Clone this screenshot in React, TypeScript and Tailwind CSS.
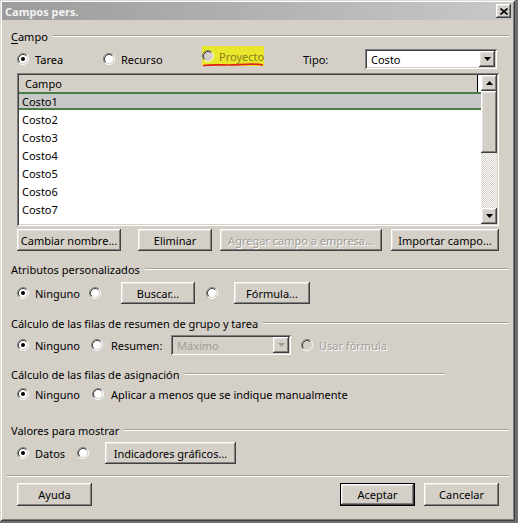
import React from "react";

// Classic 3D bevels
const RAISED =
  "bg-[#d4d0c8] shadow-[inset_-1px_-1px_0_#404040,inset_1px_1px_0_#ffffff,inset_-2px_-2px_0_#808080,inset_2px_2px_0_#e6e3de]";
const SUNKEN =
  "shadow-[inset_1px_1px_0_#808080,inset_-1px_-1px_0_#ffffff,inset_2px_2px_0_#404040,inset_-2px_-2px_0_#d4d0c8]";
const DISABLED_TEXT = "text-[#a09d97] [text-shadow:1px_1px_0_#ffffff]";

function Radio({ checked = false, disabled = false }: { checked?: boolean; disabled?: boolean }) {
  return (
    <svg width="12" height="12" viewBox="0 0 12 12" className="block shrink-0">
      <circle cx="6" cy="6" r="4.5" fill={disabled ? "#d4d0c8" : "#ffffff"} />
      <path d="M2.11 9.89A5.5 5.5 0 0 1 9.89 2.11" fill="none" stroke="#808080" />
      <path d="M9.89 2.11A5.5 5.5 0 0 1 2.11 9.89" fill="none" stroke="#ffffff" />
      <path d="M2.82 9.18A4.5 4.5 0 0 1 9.18 2.82" fill="none" stroke="#404040" />
      <path d="M9.18 2.82A4.5 4.5 0 0 1 2.82 9.18" fill="none" stroke="#d4d0c8" />
      {checked && <circle cx="6" cy="6" r="2" fill="#000000" />}
    </svg>
  );
}

function Option({
  label,
  checked = false,
  disabled = false,
  className = "",
  labelClass = "ml-[6px]",
}: {
  label: string;
  checked?: boolean;
  disabled?: boolean;
  className?: string;
  labelClass?: string;
}) {
  return (
    <div className={`flex items-center ${className}`}>
      <Radio checked={checked} disabled={disabled} />
      <span className={`${labelClass} whitespace-nowrap ${disabled ? DISABLED_TEXT : ""}`}>{label}</span>
    </div>
  );
}

function Btn({
  label,
  className = "",
  disabled = false,
  isDefault = false,
}: {
  label: string;
  className?: string;
  disabled?: boolean;
  isDefault?: boolean;
}) {
  const face = (
    <div
      className={`w-full h-full flex items-center justify-center whitespace-nowrap ${RAISED} ${
        disabled ? DISABLED_TEXT : ""
      }`}
    >
      {label}
    </div>
  );
  if (isDefault) return <div className={`border border-black ${className}`}>{face}</div>;
  return <div className={className}>{face}</div>;
}

function Arrow({ up = false, color = "#000000" }: { up?: boolean; color?: string }) {
  return (
    <svg width="7" height="4" viewBox="0 0 7 4" className="block">
      <polygon points={up ? "3.5,0 7,4 0,4" : "0,0 7,0 3.5,4"} fill={color} />
    </svg>
  );
}

function Combo({
  value,
  disabled = false,
  className = "",
}: {
  value: string;
  disabled?: boolean;
  className?: string;
}) {
  return (
    <div className={`h-[20px] p-[2px] flex ${SUNKEN} ${disabled ? "bg-[#d4d0c8]" : "bg-white"} ${className}`}>
      <div className={`flex-1 flex items-center pl-[4px] ${disabled ? "text-[#a09d97]" : ""}`}>{value}</div>
      <div className={`w-[16px] h-[16px] flex items-center justify-center ${RAISED}`}>
        <Arrow color={disabled ? "#a09d97" : "#000000"} />
      </div>
    </div>
  );
}

function Legend({
  children,
  className = "",
  lineClass = "",
}: {
  children: React.ReactNode;
  className?: string;
  lineClass?: string;
}) {
  return (
    <div className={`h-[16px] flex items-center ${className}`}>
      <span className="whitespace-nowrap">{children}</span>
      <div className={`flex-1 ml-[5px] h-[2px] border-t border-t-[#a0a0a0] border-b border-b-white ${lineClass}`} />
    </div>
  );
}

const FIELDS = ["Costo1", "Costo2", "Costo3", "Costo4", "Costo5", "Costo6", "Costo7", "Costo8"];

function FieldList() {
  return (
    <div className={`mt-[4px] ml-[6px] w-[482px] h-[153px] p-[2px] bg-white flex ${SUNKEN}`}>
      <div className="flex-1 flex flex-col overflow-hidden">
        <div className="h-[17px] shrink-0 flex bg-[#d4d0c8]">
          <div className="w-[459px] border-r border-black flex items-center pl-[6px]">Campo</div>
          <div className="flex-1 bg-white" />
        </div>
        {FIELDS.map((f, i) => (
          <div
            key={f}
            className={`h-[18px] shrink-0 flex items-center pl-[3px] ${
              i === 0 ? "bg-[#c8c8c8] border-y-2 border-[#4b7d4b]" : "bg-white"
            }`}
          >
            {f}
          </div>
        ))}
      </div>
      <div className="w-[16px] flex flex-col">
        <div className={`h-[16px] flex items-center justify-center ${RAISED}`}>
          <Arrow up />
        </div>
        <div className={`h-[62px] ${RAISED}`} />
        <div className="flex-1 bg-[repeating-conic-gradient(#d4d0c8_0%_25%,#ffffff_0%_50%)] bg-size-[2px_2px]" />
        <div className={`h-[16px] flex items-center justify-center ${RAISED}`}>
          <Arrow />
        </div>
      </div>
    </div>
  );
}

export default function App() {
  return (
    <div className="w-[518px] h-[523px] bg-[#6f6f6f] overflow-hidden [font-family:'Noto_Sans','Open_Sans',sans-serif] text-[11px] leading-none text-black">
      <div className="w-[515px] h-[521px] bg-[#d4d0c8] flex flex-col shadow-[inset_1px_1px_0_#dcdad4,inset_-1px_-1px_0_#404040,inset_2px_2px_0_#ffffff,inset_-2px_-2px_0_#808080]">
        {/* title bar */}
        <div className="mx-[2px] mt-[2px] h-[18px] shrink-0 flex items-center pl-[3px] bg-linear-to-r from-[#9c9c9c] to-[#c8c8c8]">
          <span className="font-bold text-[11px] text-[#f2f2f2]">Campos pers.</span>
          <div className={`ml-auto mr-[2px] w-[15px] h-[14px] flex items-center justify-center ${RAISED}`}>
            <svg width="8" height="7" viewBox="0 0 8 7" className="block">
              <path d="M0.5 0.5L7.5 6.5M7.5 0.5L0.5 6.5" stroke="#000" strokeWidth="1.6" />
            </svg>
          </div>
        </div>

        <div className="flex flex-col pl-[11px] pr-[6px]">
          <Legend className="mt-[8px]">
            <span className="underline underline-offset-2">C</span>ampo
          </Legend>

          <div className="mt-[5px] ml-[6px] w-[482px] h-[20px] flex items-center">
            <Option label="Tarea" checked className="w-[86px]" />
            <Option label="Recurso" className="w-[99px]" />
            <div className="w-[101px] h-full flex">
              <div className="relative self-start -mt-[3px] h-[20px] w-[62px] bg-[#e9e72c] flex items-center">
                <Radio disabled />
                <span className="ml-[5px] text-[#86801a]">Proyecto</span>
                <svg className="absolute left-0 top-[16px]" width="62" height="5" viewBox="0 0 62 5">
                  <path d="M1 3.5C12 2 25 3.6 38 2.6S55 1.8 61 3" stroke="#e0201c" strokeWidth="1.6" fill="none" />
                </svg>
              </div>
            </div>
            <div className="w-[62px]">Tipo:</div>
            <Combo value="Costo" className="w-[132px]" />
          </div>

          <FieldList />

          <div className="mt-[3px] ml-[6px] w-[482px] h-[22px] flex">
            <Btn label="Cambiar nombre..." className="w-[104px]" />
            <Btn label="Eliminar" className="ml-[17px] w-[74px]" />
            <Btn label="Agregar campo a empresa..." disabled className="ml-[8px] w-[162px]" />
            <Btn label="Importar campo..." className="ml-[9px] w-[108px]" />
          </div>

          <Legend className="mt-[10px]">Atributos personalizados</Legend>
          <div className="mt-[5px] ml-[6px] h-[22px] flex items-center">
            <Option label="Ninguno" checked className="w-[72px]" />
            <Radio />
            <Btn label="Buscar..." className="ml-[20px] w-[74px] h-full" />
            <div className="ml-[11px]">
              <Radio />
            </div>
            <Btn label="Fórmula..." className="ml-[16px] w-[76px] h-full" />
          </div>

          <Legend className="mt-[11px]">Cálculo de las filas de resumen de grupo y tarea</Legend>
          <div className="mt-[4px] ml-[6px] h-[20px] flex items-center">
            <Option label="Ninguno" checked className="w-[74px]" />
            <Option label="Resumen:" className="w-[80px]" labelClass="ml-[8px]" />
            <Combo value="Máximo" disabled className="w-[120px]" />
            <Option label="Usar fórmula" disabled className="ml-[10px]" labelClass="ml-[6px]" />
          </div>

          <Legend className="mt-[11px]" lineClass="mr-[64px]">
            Cálculo de las filas de asignación
          </Legend>
          <div className="mt-[4px] ml-[6px] h-[16px] flex items-center">
            <Option label="Ninguno" checked className="w-[75px]" />
            <Option label="Aplicar a menos que se indique manualmente" labelClass="ml-[7px]" />
          </div>

          <Legend className="mt-[20px]">Valores para mostrar</Legend>
          <div className="mt-[4px] ml-[6px] h-[22px] flex items-center">
            <Option label="Datos" checked className="w-[60px]" />
            <Radio />
            <Btn label="Indicadores gráficos..." className="ml-[16px] w-[131px] h-full" />
          </div>

          <div className="mt-[11px] -ml-[4px] h-[2px] border-t border-t-[#a0a0a0] border-b border-b-white" />

          <div className="mt-[6px] ml-[6px] w-[482px] h-[23px] flex">
            <Btn label="Ayuda" className="w-[75px]" />
            <Btn label="Aceptar" isDefault className="ml-auto w-[75px]" />
            <Btn label="Cancelar" className="ml-[9px] w-[75px]" />
          </div>
        </div>
      </div>
    </div>
  );
}
